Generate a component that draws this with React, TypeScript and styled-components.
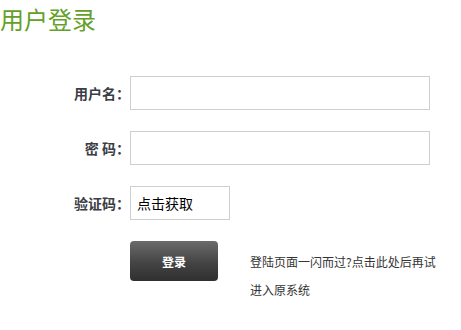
import React from "react";
import styled, { createGlobalStyle } from "styled-components";

const GlobalStyle = createGlobalStyle`
  html, body {
    margin: 0;
    padding: 0;
    background: #ffffff;
    font-family: "Noto Sans CJK SC", "Noto Sans", sans-serif;
  }
`;

const Page = styled.div`
  width: 461px;
  height: 330px;
  display: flex;
  flex-direction: column;
`;

const Title = styled.h1`
  margin: 0;
  padding-top: 2px;
  font-size: 24px;
  line-height: 34px;
  font-weight: normal;
  color: #63a02a;
`;

const Form = styled.form`
  margin-top: 40px;
  display: grid;
  grid-template-columns: 130px auto;
  column-gap: 0;
  row-gap: 21px;
  align-items: center;
`;

const Label = styled.label`
  text-align: right;
  font-size: 14px;
  font-weight: bold;
  color: #3a3d44;
  line-height: 34px;
  white-space: pre;
`;

const TextInput = styled.input<{ $width: number }>`
  box-sizing: border-box;
  width: ${(p) => p.$width}px;
  height: 34px;
  border: 1px solid #cfcfcf;
  padding: 0 6px;
  font-family: "Noto Sans CJK SC", "Noto Sans", sans-serif;
  font-size: 14px;
  color: #000;
  outline: none;
  background: #fff;
  &::placeholder {
    color: #000;
  }
`;

const ActionRow = styled.div`
  grid-column: 2;
  display: flex;
  align-items: flex-start;
  gap: 32px;
`;

const SubmitButton = styled.button`
  width: 88px;
  height: 40px;
  border: none;
  border-radius: 4px;
  background: linear-gradient(to bottom, #6b6b6b 0%, #444444 55%, #2f2f2f 100%);
  color: #ffffff;
  font-family: "Noto Sans CJK SC", "Noto Sans", sans-serif;
  font-size: 12px;
  font-weight: bold;
  cursor: pointer;
  padding: 0;
`;

const HelpText = styled.p`
  margin: 7px 0 0 0;
  width: 192px;
  font-size: 12px;
  line-height: 28px;
  color: #333333;
`;

export default function App() {
  return (
    <>
      <GlobalStyle />
      <Page>
        <Title>用户登录</Title>
        <Form onSubmit={(e) => e.preventDefault()}>
          <Label>用户名：</Label>
          <TextInput $width={300} type="text" />
          <Label>密 码：</Label>
          <TextInput $width={300} type="password" />
          <Label>验证码：</Label>
          <TextInput $width={100} type="text" placeholder="点击获取" />
          <ActionRow>
            <SubmitButton type="submit">登录</SubmitButton>
            <HelpText>登陆页面一闪而过?点击此处后再试进入原系统</HelpText>
          </ActionRow>
        </Form>
      </Page>
    </>
  );
}
